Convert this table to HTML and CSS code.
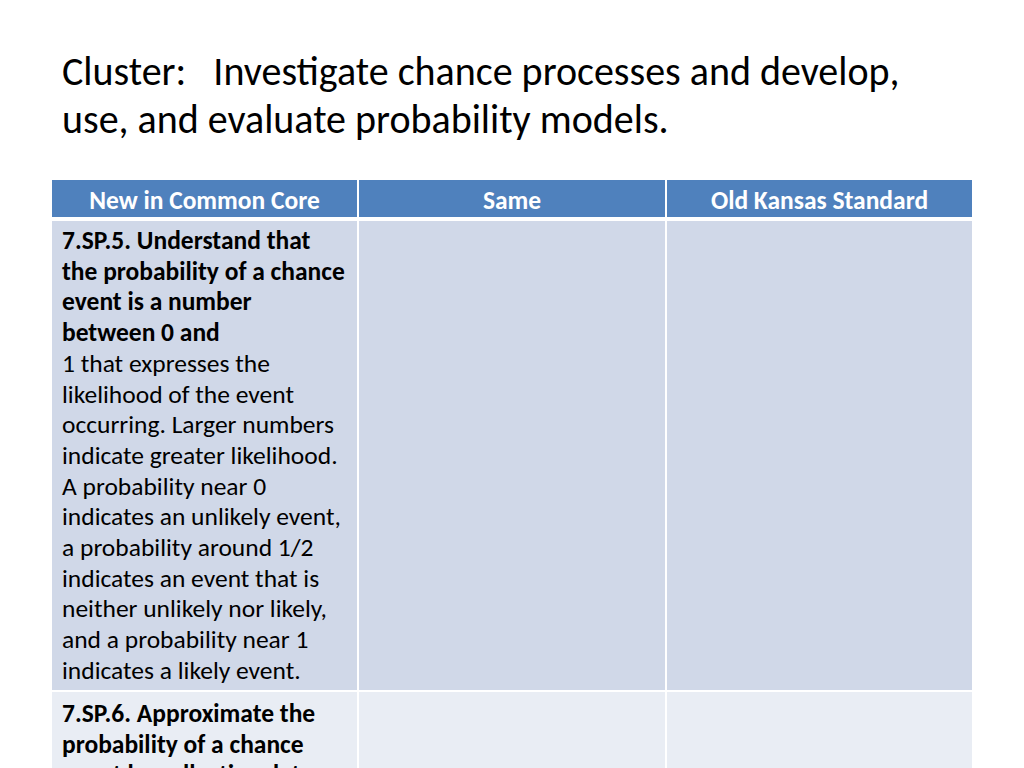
FILE: index.html
```html
<!DOCTYPE html>
<html>
<head>
<meta charset="utf-8">
<link rel="stylesheet" href="styles.css">
</head>
<body>
<div class="slide">
  <h1 class="title">Cluster:&nbsp;&nbsp; Investigate chance processes and develop,<br>use, and evaluate probability models.</h1>
  <div class="table">
    <div class="hd">New in Common Core</div>
    <div class="hd">Same</div>
    <div class="hd">Old Kansas Standard</div>
    <div class="sep"></div>
    <div class="cell odd text"><b>7.SP.5. Understand that<br>the probability of a chance<br>event is a number<br>between 0 and</b><br>1 that expresses the<br>likelihood of the event<br>occurring. Larger numbers<br>indicate greater likelihood.<br>A probability near 0<br>indicates an unlikely event,<br>a probability around 1/2<br>indicates an event that is<br>neither unlikely nor likely,<br>and a probability near 1<br>indicates a likely event.</div>
    <div class="cell odd"></div>
    <div class="cell odd"></div>
    <div class="cell even text"><b>7.SP.6. Approximate the<br>probability of a chance<br>event by collecting data</b></div>
    <div class="cell even"></div>
    <div class="cell even"></div>
  </div>
</div>
</body>
</html>
```
FILE: styles.css
```css
html, body {
  margin: 0;
  padding: 0;
  background: #ffffff;
}
.slide {
  width: 1024px;
  height: 768px;
  overflow: hidden;
  font-family: Carlito, Calibri, "Open Sans", sans-serif;
  color: #000;
}
.title {
  margin: 0;
  padding: 48px 0 0 62px;
  height: 180px;
  box-sizing: border-box;
  font-weight: normal;
  font-size: 40px;
  line-height: 48px;
  white-space: nowrap;
}
.table {
  margin-left: 52px;
  width: 920px;
  display: grid;
  grid-template-columns: 305px 306px 305px;
  column-gap: 2px;
  row-gap: 2px;
  grid-template-rows: 37px 0px 469px 200px;
}
.sep {
  grid-column: 1 / 4;
  height: 0;
}
.hd {
  background: #4f81bd;
  color: #fff;
  font-weight: bold;
  font-size: 25.5px;
  padding-top: 3px;
  box-sizing: border-box;
  display: flex;
  align-items: center;
  justify-content: center;
}
.cell {
  font-size: 25.5px;
  line-height: 30.7px;
  white-space: nowrap;
}
.text {
  padding: 5px 10px 0 10px;
}
.even.text {
  padding-top: 7px;
}
.odd { background: #d0d8e8; }
.even { background: #e9edf4; }
```
